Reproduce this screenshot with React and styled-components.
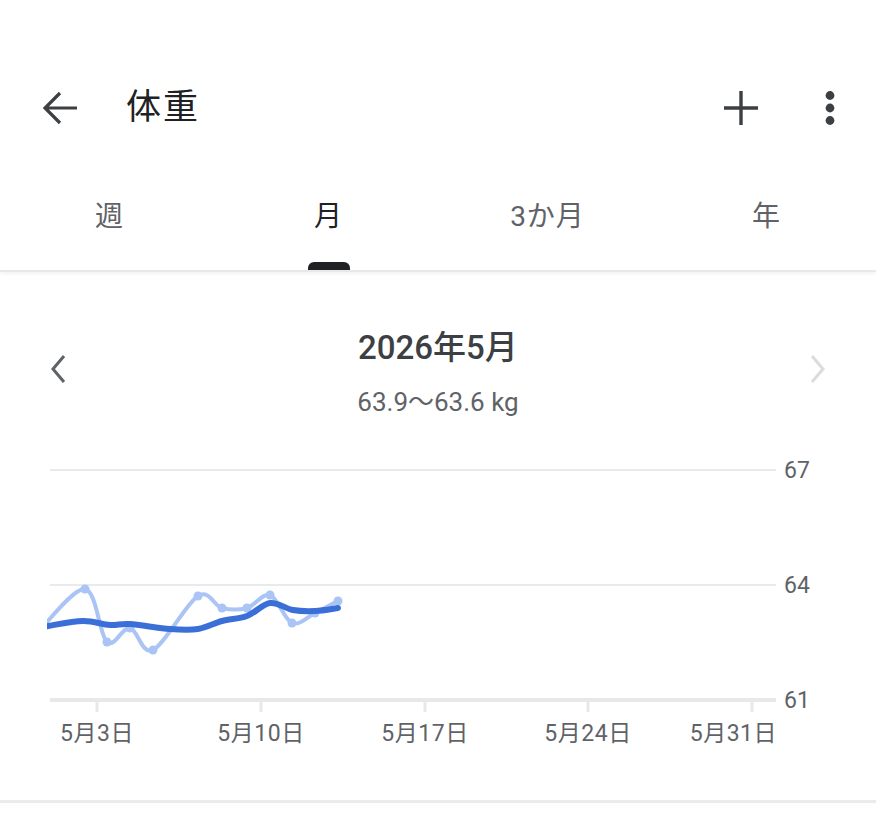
import React from "react";
import styled, { createGlobalStyle } from "styled-components";

const GlobalStyle = createGlobalStyle`
  html, body {
    margin: 0;
    padding: 0;
    background: #fff;
  }
  body {
    font-family: "Roboto", "Noto Sans CJK JP", sans-serif;
    color: #202124;
  }
`;

const Page = styled.div`
  width: 876px;
  min-height: 830px;
  background: #fff;
`;

const TopBar = styled.div`
  display: flex;
  align-items: center;
  height: 96px;
  padding: 60px 36px 0 40px;
  box-sizing: content-box;
`;

const IconButton = styled.div`
  width: ${(p) => p.$size || 52}px;
  height: 52px;
  display: flex;
  align-items: center;
  justify-content: center;
  color: #3c4043;
`;

const Title = styled.div`
  flex: 1;
  margin-left: 46px;
  font-size: 35px;
  line-height: 44px;
  letter-spacing: 2px;
  color: #202124;
`;

const Actions = styled.div`
  display: flex;
  align-items: center;
  gap: 61px;
`;

const Tabs = styled.div`
  display: grid;
  grid-template-columns: repeat(4, 1fr);
  height: 114px;
  border-bottom: 2px solid #e8e8e8;
  box-shadow: 0 2px 3px rgba(0, 0, 0, 0.05);
`;

const Tab = styled.div`
  display: flex;
  flex-direction: column;
  align-items: center;
  justify-content: flex-end;
`;

const TabLabel = styled.div`
  font-size: 28px;
  line-height: 36px;
  letter-spacing: 1px;
  margin-bottom: 27px;
  color: ${(p) => (p.$active ? "#202124" : "#5f6368")};
`;

const Indicator = styled.div`
  width: 42px;
  height: 8px;
  border-radius: 6px 6px 0 0;
  background: ${(p) => (p.$active ? "#202124" : "transparent")};
`;

const RangeHeader = styled.div`
  display: flex;
  align-items: center;
  justify-content: space-between;
  padding: 56px 44px 0 44px;
`;

const Chevron = styled.div`
  width: 28px;
  height: 40px;
  margin-bottom: 8px;
  display: flex;
  align-items: center;
  justify-content: center;
  color: ${(p) => (p.$disabled ? "#dadce0" : "#5f6368")};
`;

const RangeText = styled.div`
  display: flex;
  flex-direction: column;
  align-items: center;
`;

const RangeTitle = styled.div`
  font-size: 33px;
  line-height: 40px;
  font-weight: 500;
  color: #3c4043;
`;

const RangeSub = styled.div`
  margin-top: 19px;
  font-size: 26px;
  line-height: 30px;
  color: #5f6368;
`;

const ChartWrap = styled.div`
  margin-top: 23px;
  height: 320px;
`;

const Footer = styled.div`
  margin-top: 40px;
  border-top: 3px solid #ebebeb;
`;

const light = [
  [38, 192], [85, 149], [107, 202], [130, 188], [153, 210], [198, 156],
  [222, 168], [247, 168], [270, 155], [292, 183], [315, 173], [338, 161],
];

const dark = [
  [30, 190], [48, 186], [83, 181], [110, 185], [130, 184], [170, 189],
  [198, 189], [222, 181], [247, 176], [270, 163], [293, 170], [315, 171],
  [338, 168],
];

// catmull-rom to bezier
const smooth = (pts) => {
  let d = `M${pts[0][0]},${pts[0][1]}`;
  for (let i = 0; i < pts.length - 1; i++) {
    const p0 = pts[i - 1] || pts[i];
    const p1 = pts[i];
    const p2 = pts[i + 1];
    const p3 = pts[i + 2] || p2;
    const c1x = p1[0] + (p2[0] - p0[0]) / 6;
    const c1y = p1[1] + (p2[1] - p0[1]) / 6;
    const c2x = p2[0] - (p3[0] - p1[0]) / 6;
    const c2y = p2[1] - (p3[1] - p1[1]) / 6;
    d += ` C${c1x},${c1y} ${c2x},${c2y} ${p2[0]},${p2[1]}`;
  }
  return d;
};

const grid = [
  { y: 30, label: "67" },
  { y: 145, label: "64" },
];

const ticks = [
  { x: 97, label: "5月3日", anchor: "middle" },
  { x: 261, label: "5月10日", anchor: "middle" },
  { x: 425, label: "5月17日", anchor: "middle" },
  { x: 588, label: "5月24日", anchor: "middle" },
  { x: 752, label: "5月31日", anchor: "end", tx: 777 },
];

const labelFont = 23;

const WeightChart = () => (
  <svg width="876" height="320" viewBox="0 0 876 320">
    <defs>
      <clipPath id="plot">
        <rect x="47" y="0" width="730" height="260" />
      </clipPath>
    </defs>
    {grid.map((g) => (
      <g key={g.label}>
        <line x1="50" x2="776" y1={g.y} y2={g.y} stroke="#e8eaed" strokeWidth="2" />
        <text x="784" y={g.y} dominantBaseline="central" fontSize={labelFont} fill="#5f6368">
          {g.label}
        </text>
      </g>
    ))}
    <line x1="50" x2="776" y1="260" y2="260" stroke="#e8e8e8" strokeWidth="4" />
    <text x="784" y="260" dominantBaseline="central" fontSize={labelFont} fill="#5f6368">
      61
    </text>
    {ticks.map((t) => (
      <g key={t.label}>
        <line x1={t.x} x2={t.x} y1="260" y2="272" stroke="#e8e8e8" strokeWidth="3" />
        <text
          x={t.tx || t.x}
          y="293"
          textAnchor={t.anchor}
          dominantBaseline="central"
          fontSize={labelFont}
          letterSpacing="0.5"
          fill="#5f6368"
        >
          {t.label}
        </text>
      </g>
    ))}
    <g clipPath="url(#plot)">
      <path d={smooth(light)} fill="none" stroke="#aac4f5" strokeWidth="4" strokeLinecap="round" />
      {light.slice(1).map(([x, y]) => (
        <circle key={x} cx={x} cy={y} r="4.5" fill="#aac4f5" />
      ))}
      <path d={smooth(dark)} fill="none" stroke="#3b6fd8" strokeWidth="6" strokeLinecap="round" />
    </g>
  </svg>
);

export default function App() {
  const tabs = ["週", "月", "3か月", "年"];
  return (
    <Page>
      <GlobalStyle />
      <TopBar>
        <IconButton $size={40}>
          <svg width="36" height="34" viewBox="0 0 36 34">
            <path
              d="M35 17H4 M18 2 L3 17 L18 32"
              fill="none"
              stroke="currentColor"
              strokeWidth="3.2"
              strokeLinejoin="miter"
            />
          </svg>
        </IconButton>
        <Title>体重</Title>
        <Actions>
          <IconButton $size={36}>
            <svg width="36" height="36" viewBox="0 0 36 36">
              <path d="M18 1V35 M1 18H35" fill="none" stroke="currentColor" strokeWidth="3.4" />
            </svg>
          </IconButton>
          <IconButton $size={20}>
            <svg width="12" height="36" viewBox="0 0 12 36">
              <circle cx="6" cy="5.5" r="4.4" fill="currentColor" />
              <circle cx="6" cy="18" r="4.4" fill="currentColor" />
              <circle cx="6" cy="30.5" r="4.4" fill="currentColor" />
            </svg>
          </IconButton>
        </Actions>
      </TopBar>
      <Tabs>
        {tabs.map((t) => (
          <Tab key={t}>
            <TabLabel $active={t === "月"}>{t}</TabLabel>
            <Indicator $active={t === "月"} />
          </Tab>
        ))}
      </Tabs>
      <RangeHeader>
        <Chevron>
          <svg width="18" height="30" viewBox="0 0 18 30">
            <path d="M15 2 L4 15 L15 28" fill="none" stroke="currentColor" strokeWidth="3" />
          </svg>
        </Chevron>
        <RangeText>
          <RangeTitle>2026年5月</RangeTitle>
          <RangeSub>63.9〜63.6 kg</RangeSub>
        </RangeText>
        <Chevron $disabled>
          <svg width="18" height="30" viewBox="0 0 18 30">
            <path d="M3 2 L14 15 L3 28" fill="none" stroke="currentColor" strokeWidth="3" />
          </svg>
        </Chevron>
      </RangeHeader>
      <ChartWrap>
        <WeightChart />
      </ChartWrap>
      <Footer />
    </Page>
  );
}
